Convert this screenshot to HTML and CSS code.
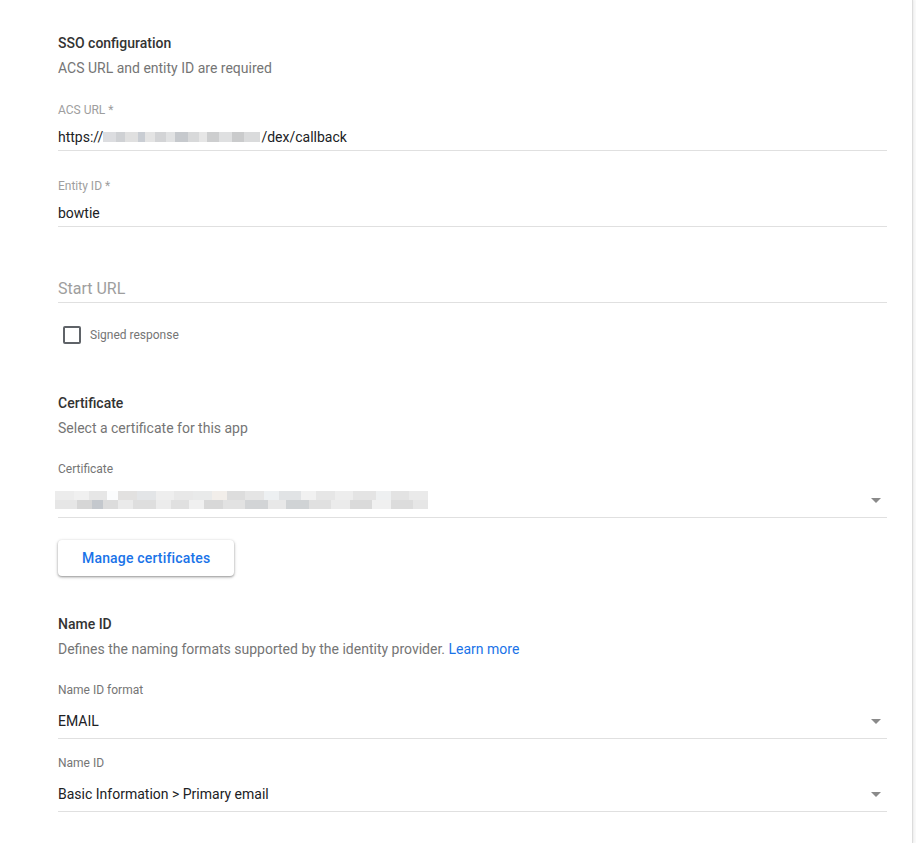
FILE: index.html
```html
<!DOCTYPE html>
<html lang="en">
<head>
<meta charset="utf-8">
<title>SSO configuration</title>
<link rel="stylesheet" href="styles.css">
</head>
<body>
<div class="card">
  <section class="section">
    <h2 class="title">SSO configuration</h2>
    <p class="desc">ACS URL and entity ID are required</p>

    <div class="field first">
      <label class="flabel">ACS URL *</label>
      <div class="fvalue">https://<span class="redact redact-url"></span>/dex/callback</div>
    </div>

    <div class="field">
      <label class="flabel">Entity ID *</label>
      <div class="fvalue">bowtie</div>
    </div>

    <div class="field">
      <label class="flabel"></label>
      <div class="fvalue placeholder">Start URL</div>
    </div>

    <label class="check-row">
      <span class="checkbox"></span>
      <span class="check-label">Signed response</span>
    </label>
  </section>

  <section class="section gap-lg">
    <h2 class="title">Certificate</h2>
    <p class="desc">Select a certificate for this app</p>

    <div class="sfield first">
      <label class="slabel">Certificate</label>
      <div class="svalue">
        <span class="redact redact-cert"></span>
        <span class="arrow"></span>
      </div>
    </div>

    <button class="btn" type="button">Manage certificates</button>
  </section>

  <section class="section gap-md">
    <h2 class="title">Name ID</h2>
    <p class="desc">Defines the naming formats supported by the identity provider. <a class="link" href="#">Learn more</a></p>

    <div class="sfield first">
      <label class="slabel">Name ID format</label>
      <div class="svalue">
        <span class="stext">EMAIL</span>
        <span class="arrow"></span>
      </div>
    </div>

    <div class="sfield">
      <label class="slabel">Name ID</label>
      <div class="svalue">
        <span class="stext">Basic Information &gt; Primary email</span>
        <span class="arrow"></span>
      </div>
    </div>
  </section>
</div>
</body>
</html>
```

FILE: styles.css
```css
html, body {
  margin: 0;
  padding: 0;
}

body {
  background: #fafafa;
  font-family: Roboto, "Liberation Sans", Arial, sans-serif;
  color: #202124;
}

.card {
  width: 913px;
  min-height: 843px;
  box-sizing: border-box;
  padding: 33px 25px 30px 58px;
  background: #ffffff;
  border-right: 1px solid #dcdcdc;
  box-shadow: 1px 0 2px rgba(0, 0, 0, 0.06);
}

.section.gap-lg {
  margin-top: 49px;
}

.section.gap-md {
  margin-top: 38px;
}

.title {
  margin: 0;
  font-size: 14px;
  line-height: 20px;
  font-weight: 500;
  color: #333333;
}

.desc {
  margin: 5px 0 0;
  font-size: 14px;
  line-height: 20px;
  color: #757575;
}

.link {
  color: #1a73e8;
  text-decoration: none;
}

/* text fields */
.field {
  margin-top: 27px;
}

.field.first {
  margin-top: 24px;
}

.flabel {
  display: block;
  min-height: 16px;
  font-size: 12px;
  line-height: 16px;
  color: #9e9e9e;
}

.fvalue {
  margin-top: 9px;
  height: 20px;
  padding-bottom: 3px;
  border-bottom: 1px solid #e0e0e0;
  font-size: 14px;
  line-height: 20px;
  color: #202124;
  white-space: nowrap;
}

.fvalue.placeholder {
  font-size: 16px;
  color: #9e9e9e;
}

/* checkbox */
.check-row {
  display: flex;
  align-items: center;
  margin-top: 23px;
  padding-left: 5px;
}

.checkbox {
  width: 18px;
  height: 18px;
  box-sizing: border-box;
  border: 2px solid #5f6368;
  border-radius: 2px;
}

.check-label {
  margin-left: 9px;
  font-size: 12px;
  line-height: 16px;
  color: #757575;
}

/* select fields */
.sfield {
  margin-top: 16px;
}

.sfield.first {
  margin-top: 23px;
}

.slabel {
  display: block;
  font-size: 12px;
  line-height: 16px;
  color: #757575;
}

.svalue {
  display: flex;
  align-items: center;
  justify-content: space-between;
  margin-top: 13px;
  height: 20px;
  padding-bottom: 7px;
  border-bottom: 1px solid #e0e0e0;
}

.stext {
  font-size: 14px;
  line-height: 20px;
  color: #202124;
}

.arrow {
  width: 0;
  height: 0;
  margin-right: 6px;
  border-left: 5px solid transparent;
  border-right: 5px solid transparent;
  border-top: 5px solid #8a8a8a;
}

/* redacted blurred text */
.redact {
  display: inline-block;
  vertical-align: middle;
}

.redact-url {
  width: 157px;
  height: 10px;
  margin: -3px 1px 0 0;
  background:
    linear-gradient(90deg,
      #dcdde0 0 8%, #cfd1d4 8% 14%, #e0e0e0 14% 22%, #c9cdd3 22% 27%,
      #e4e4e4 27% 33%, #d3d4d6 33% 40%, #e1e2e3 40% 46%, #c6c9cd 46% 54%,
      #d8d9da 54% 61%, #e6e6e6 61% 66%, #cdcecf 66% 74%, #dfe0e1 74% 82%,
      #cacbcc 82% 90%, #dadbdc 90% 100%);
}

.redact-cert {
  width: 373px;
  height: 18px;
  margin-left: -3px;
  background:
    linear-gradient(90deg,
      #ececec 0 5%, #f0f0f0 5% 9%, #e6e6e6 9% 14%, #fbfcfd 14% 17%,
      #e2e1e0 17% 22%, #e3e5e7 22% 27%, #eeeeee 27% 32%, #e8e8e8 32% 37%,
      #e9eaea 37% 42%, #f2eeea 42% 46%, #dddddd 46% 51%, #e5e5e5 51% 56%,
      #edf0f2 56% 60%, #e1e3e5 60% 66%, #f1f1f1 66% 70%, #e6e6e6 70% 75%,
      #ededed 75% 80%, #e4e4e4 80% 86%, #eef0f1 86% 90%, #e3e3e3 90% 95%,
      #eaeaea 95% 100%) top / 100% 50% no-repeat,
    linear-gradient(90deg,
      #e6e6e6 0 6%, #d6d6d6 6% 10%, #c4c8cd 10% 13%, #dcdcdc 13% 17%,
      #eaeaea 17% 21%, #dedede 21% 27%, #ececec 27% 31%, #e0e0e0 31% 36%,
      #f0f0f0 36% 40%, #d8d8d8 40% 45%, #e2e2e2 45% 51%, #d2d4d6 51% 57%,
      #e8e8e8 57% 62%, #d0d3d5 62% 68%, #e0e0e0 68% 74%, #ebebeb 74% 79%,
      #dadada 79% 85%, #f0f0f0 85% 90%, #dcdcdc 90% 96%, #e6e6e6 96% 100%) bottom / 100% 50% no-repeat;
}

/* button */
.btn {
  display: block;
  margin-top: 22px;
  height: 36px;
  padding: 0 24px;
  border: none;
  border-radius: 4px;
  background: #ffffff;
  box-shadow: 0 1px 2px rgba(0, 0, 0, 0.3), 0 1px 3px 1px rgba(0, 0, 0, 0.12);
  font-family: Roboto, "Liberation Sans", Arial, sans-serif;
  font-size: 14px;
  font-weight: 500;
  letter-spacing: 0.17px;
  color: #1a73e8;
  cursor: pointer;
}
```
